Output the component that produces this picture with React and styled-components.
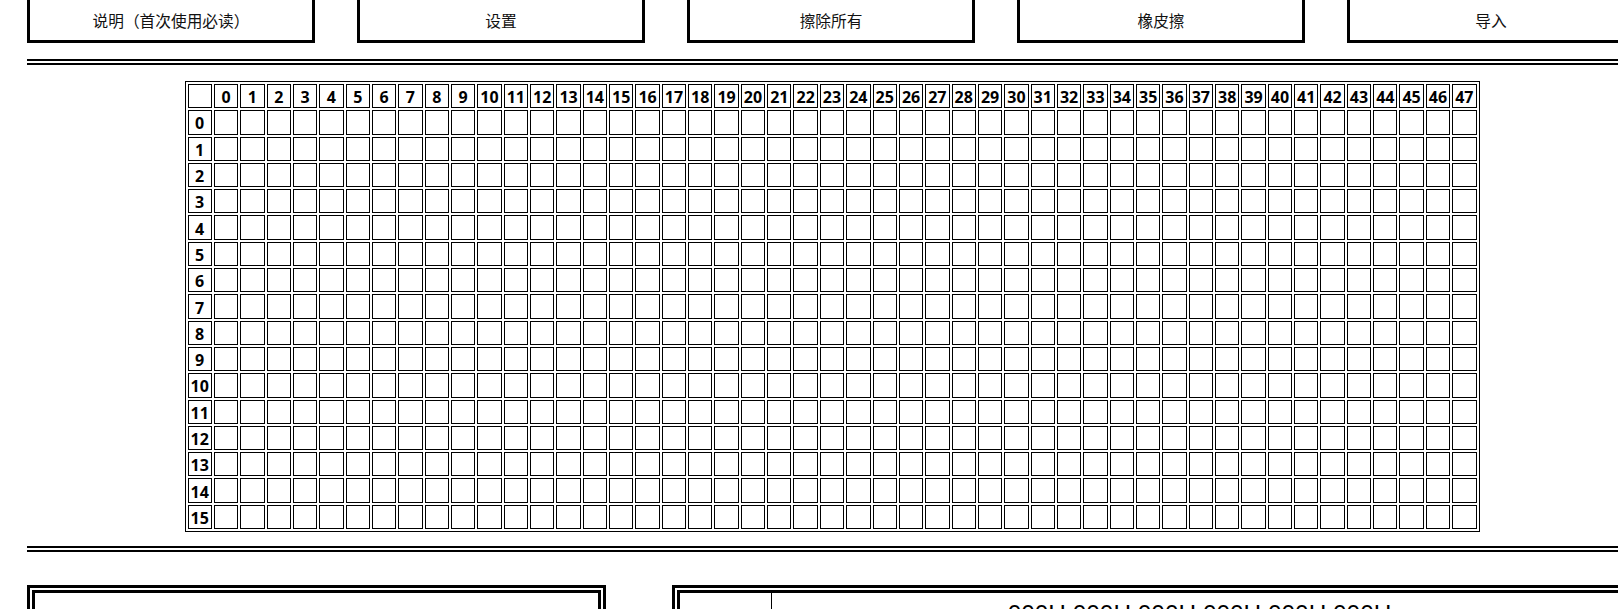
import React from 'react';
import styled, { createGlobalStyle } from 'styled-components';

const GlobalStyle = createGlobalStyle`
  html, body {
    margin: 0;
    padding: 0;
    overflow: hidden;
    background: #fff;
    color: #000;
    font-family: "Noto Sans CJK SC", "Liberation Sans", sans-serif;
  }
`;

const Page = styled.div`
  width: 1610px;
  padding-left: 27px;
  display: flex;
  flex-direction: column;
`;

const Toolbar = styled.div`
  display: flex;
  gap: 42px;
`;

const ToolButton = styled.button`
  flex: none;
  width: 288px;
  height: 43px;
  box-sizing: border-box;
  border: 3px solid #000;
  border-top: none;
  background: #fff;
  color: #111;
  font-family: "Noto Sans CJK SC", sans-serif;
  font-size: 15.7px;
  padding: 1px 0 0;
  cursor: pointer;
`;

const Rule = styled.div`
  height: 0;
  border-top: 6px double #000;
  margin-top: ${p => p.$top}px;
`;

const Grid = styled.div`
  align-self: center;
  margin-top: 16px;
  width: 1295px;
  box-sizing: border-box;
  border: 1px solid #000;
  padding: 2px;
  display: grid;
  grid-template-columns: repeat(49, 1fr);
  grid-auto-rows: 24.3px;
  gap: 2px;
`;

const Cell = styled.div`
  box-sizing: border-box;
  border: 1px solid #000;
  display: flex;
  align-items: center;
  justify-content: center;
  padding-top: 2px;
  font-family: "Open Sans", sans-serif;
  font-weight: 700;
  font-size: 16px;
  line-height: 1;
  overflow: hidden;
  white-space: nowrap;
`;

const PanelRow = styled.div`
  display: flex;
  gap: 66px;
  margin-top: 33px;
`;

const Panel = styled.div`
  flex: none;
  width: ${p => p.$w}px;
  box-sizing: border-box;
  border: 3px solid #000;
  padding: 2px;
`;

const PanelInner = styled.div`
  border: 3px solid #000;
  height: 220px;
  display: flex;
`;

const LabelCell = styled.div`
  width: 91px;
  border-right: 1px solid #000;
`;

const ValueCell = styled.div`
  flex: 1;
  text-align: center;
  padding-top: 7px;
  font-family: "Liberation Sans", Arial, sans-serif;
  font-size: 24.4px;
`;

const buttons = ['说明（首次使用必读）', '设置', '擦除所有', '橡皮擦', '导入'];
const cols = Array.from({ length: 48 }, (_, i) => i);
const rows = Array.from({ length: 16 }, (_, i) => i);

export default function App() {
  return (
    <>
      <GlobalStyle />
      <Page>
        <Toolbar>
          {buttons.map(b => <ToolButton key={b}>{b}</ToolButton>)}
        </Toolbar>
        <Rule $top={16} />
        <Grid>
          <Cell />
          {cols.map(c => <Cell key={'h' + c}>{c}</Cell>)}
          {rows.map(r => (
            <React.Fragment key={r}>
              <Cell>{r}</Cell>
              {cols.map(c => <Cell key={c} />)}
            </React.Fragment>
          ))}
        </Grid>
        <Rule $top={14} />
        <PanelRow>
          <Panel $w={579}>
            <PanelInner />
          </Panel>
          <Panel $w={963}>
            <PanelInner>
              <LabelCell />
              <ValueCell>000H 000H 000H 000H 000H 000H</ValueCell>
            </PanelInner>
          </Panel>
        </PanelRow>
      </Page>
    </>
  );
}
